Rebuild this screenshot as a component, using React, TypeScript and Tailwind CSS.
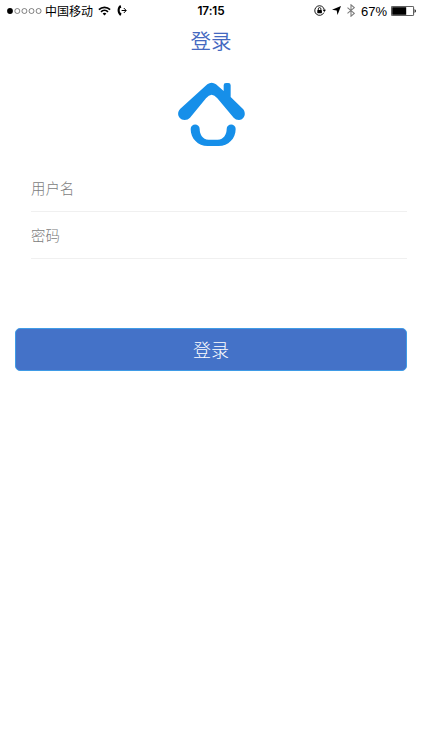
import React, { useState } from 'react'

const FIELDS: Array<{ id: 'username' | 'password'; label: string; type: string }> = [
  { id: 'username', label: '用户名', type: 'text' },
  { id: 'password', label: '密码', type: 'password' }
]

function SignalDots() {
  return (
    <svg width="35" height="6" viewBox="0 0 35 6" className="shrink-0">
      <circle cx="3" cy="3" r="2.9" fill="#000" />
      {[10.3, 17.4, 24.5, 31.6].map(cx => (
        <circle key={cx} cx={cx} cy="3" r="2.5" fill="none" stroke="#333" strokeWidth="0.6" />
      ))}
    </svg>
  )
}

function WifiIcon() {
  return (
    <svg width="13" height="10" viewBox="0 0 13 10" className="block shrink-0" fill="none" stroke="#000" strokeWidth="1.7">
      <path d="M0.9 3.6 A8 8 0 0 1 12.1 3.6" />
      <path d="M3 5.9 A5 5 0 0 1 10 5.9" />
      <path d="M6.5 9.5 L4.6 7.6 A2.8 2.8 0 0 1 8.4 7.6 Z" fill="#000" stroke="none" />
    </svg>
  )
}

function CallForwardIcon() {
  return (
    <svg width="10" height="11" viewBox="0 0 10 11" className="block shrink-0">
      <path d="M2.5 0.6 L3.7 0.3 L4.3 2.7 L3 3.3 C2.6 4.8 2.6 6 3.1 7.5 L4.4 7.9 L4 10.4 L2.8 10.4 C0 8 -0.2 3.2 2.5 0.6 Z" />
      <path d="M4.6 5.5 H9 M6.8 3 L9.2 5.5 L6.8 8" fill="none" stroke="#000" strokeWidth="1" />
    </svg>
  )
}

function RotationLockIcon() {
  return (
    <svg width="12" height="11" viewBox="0 0 12 11" className="shrink-0">
      <path d="M9.9 7.6 A4.8 4.8 0 1 1 10.3 4.8" fill="none" stroke="#000" strokeWidth="0.9" />
      <path d="M8.6 4.8 H12 L10.3 7.1 Z" />
      <rect x="3.3" y="5" width="4.6" height="3.2" rx="0.4" />
      <path d="M4.3 5 V3.9 A1.3 1.3 0 0 1 6.9 3.9 V5" fill="none" stroke="#000" strokeWidth="0.9" />
    </svg>
  )
}

function BatteryIcon() {
  return (
    <svg width="26" height="10" viewBox="0 0 26 10" className="block shrink-0">
      <rect x="0.4" y="0.4" width="22.2" height="9.2" rx="0.8" fill="none" stroke="#000" strokeWidth="0.7" />
      <rect x="1.2" y="1.2" width="14" height="7.6" />
      <path d="M23.6 3 Q26.2 5 23.6 7 Z" />
    </svg>
  )
}

function StatusBar() {
  return (
    <div className="grid h-[21px] grid-cols-[1fr_auto_1fr] items-center pr-[5px] pl-[7px] leading-none text-black">
      <div className="flex items-center">
        <SignalDots />
        <span className="ml-[3px] pt-[2px] text-[12px]">中国移动</span>
        <span className="ml-[5px]"><WifiIcon /></span>
        <span className="ml-[6px]"><CallForwardIcon /></span>
      </div>
      <span className="pt-[2px] pr-[2px] font-['Inter'] text-[11.8px] font-semibold tracking-[-0.1px]">17:15</span>
      <div className="flex items-center justify-end">
        <RotationLockIcon />
        <svg width="9" height="9" viewBox="0 0 9 9" className="ml-[6px] shrink-0">
          <path d="M9 0 L5.5 9 L4.7 4.4 L0 3.7 Z" />
        </svg>
        <svg width="8" height="13" viewBox="0 0 8 13" className="ml-[6px] shrink-0" fill="none" stroke="#7c7c7c" strokeWidth="1.1">
          <path d="M0.5 3.6 L7.3 9.3 L4 12.2 V0.8 L7.3 3.7 L0.5 9.4" />
        </svg>
        <span className="ml-[6px] pt-px text-[13px]">67%</span>
        <span className="ml-[4px]"><BatteryIcon /></span>
      </div>
    </div>
  )
}

// House roof with a chimney over a smile
function Logo() {
  return (
    <svg width="69" height="65" viewBox="27 24 207 195" fill="#168fe9">
      <path d="M118 31 Q131 22 144 31 L167 51 V34 Q167 27 174 27 H181 Q188 27 188 34 V69 L225 105 C236 118 229 137 213 138 Q203 138 197 131 L148 73 Q131 52 114 73 L66 131 Q60 138 50 138 C31 137 24 117 37 104 Z" />
      <path d="M68 165 C68 147 95 147 95 165 C95 180 103 197 122 197 H149 C168 197 176 180 176 165 C176 147 203 147 203 165 C203 194 181 216 152 216 H119 C90 216 68 194 68 165 Z" />
    </svg>
  )
}

export default function App() {
  const [form, setForm] = useState({ username: '', password: '' })

  return (
    <div className="flex min-h-[750px] w-full flex-col bg-white font-['Liberation_Sans','Noto_Sans_CJK_SC',sans-serif]">
      <StatusBar />
      <header className="flex h-[39px] items-center justify-center pt-[4px]">
        <h1 className="text-[20.5px] leading-none font-[350] text-[#4468c0]">登录</h1>
      </header>

      <div className="flex justify-center pt-[22px]">
        <Logo />
      </div>

      <form onSubmit={e => e.preventDefault()}>
        <div className="mt-[18px] mr-[15px] ml-[31px]">
          {FIELDS.map(({ id, label, type }) => (
            <input
              key={id}
              type={type}
              aria-label={label}
              placeholder={label}
              value={form[id]}
              onChange={e => setForm({ ...form, [id]: e.target.value })}
              className="block h-[47px] w-full border-b border-[#f0f0f0] pt-px text-[14.4px] font-light text-gray-700 outline-none placeholder:text-[#7c7c7c]"
            />
          ))}
        </div>
        <div className="px-[15px] pt-[69px]">
          <button
            type="submit"
            className="block h-[43px] w-full rounded-[5px] border border-[#3f9be6] bg-[#4472c8] pt-[2px] text-[18px] leading-none font-light text-white"
          >
            登录
          </button>
        </div>
      </form>
    </div>
  )
}
